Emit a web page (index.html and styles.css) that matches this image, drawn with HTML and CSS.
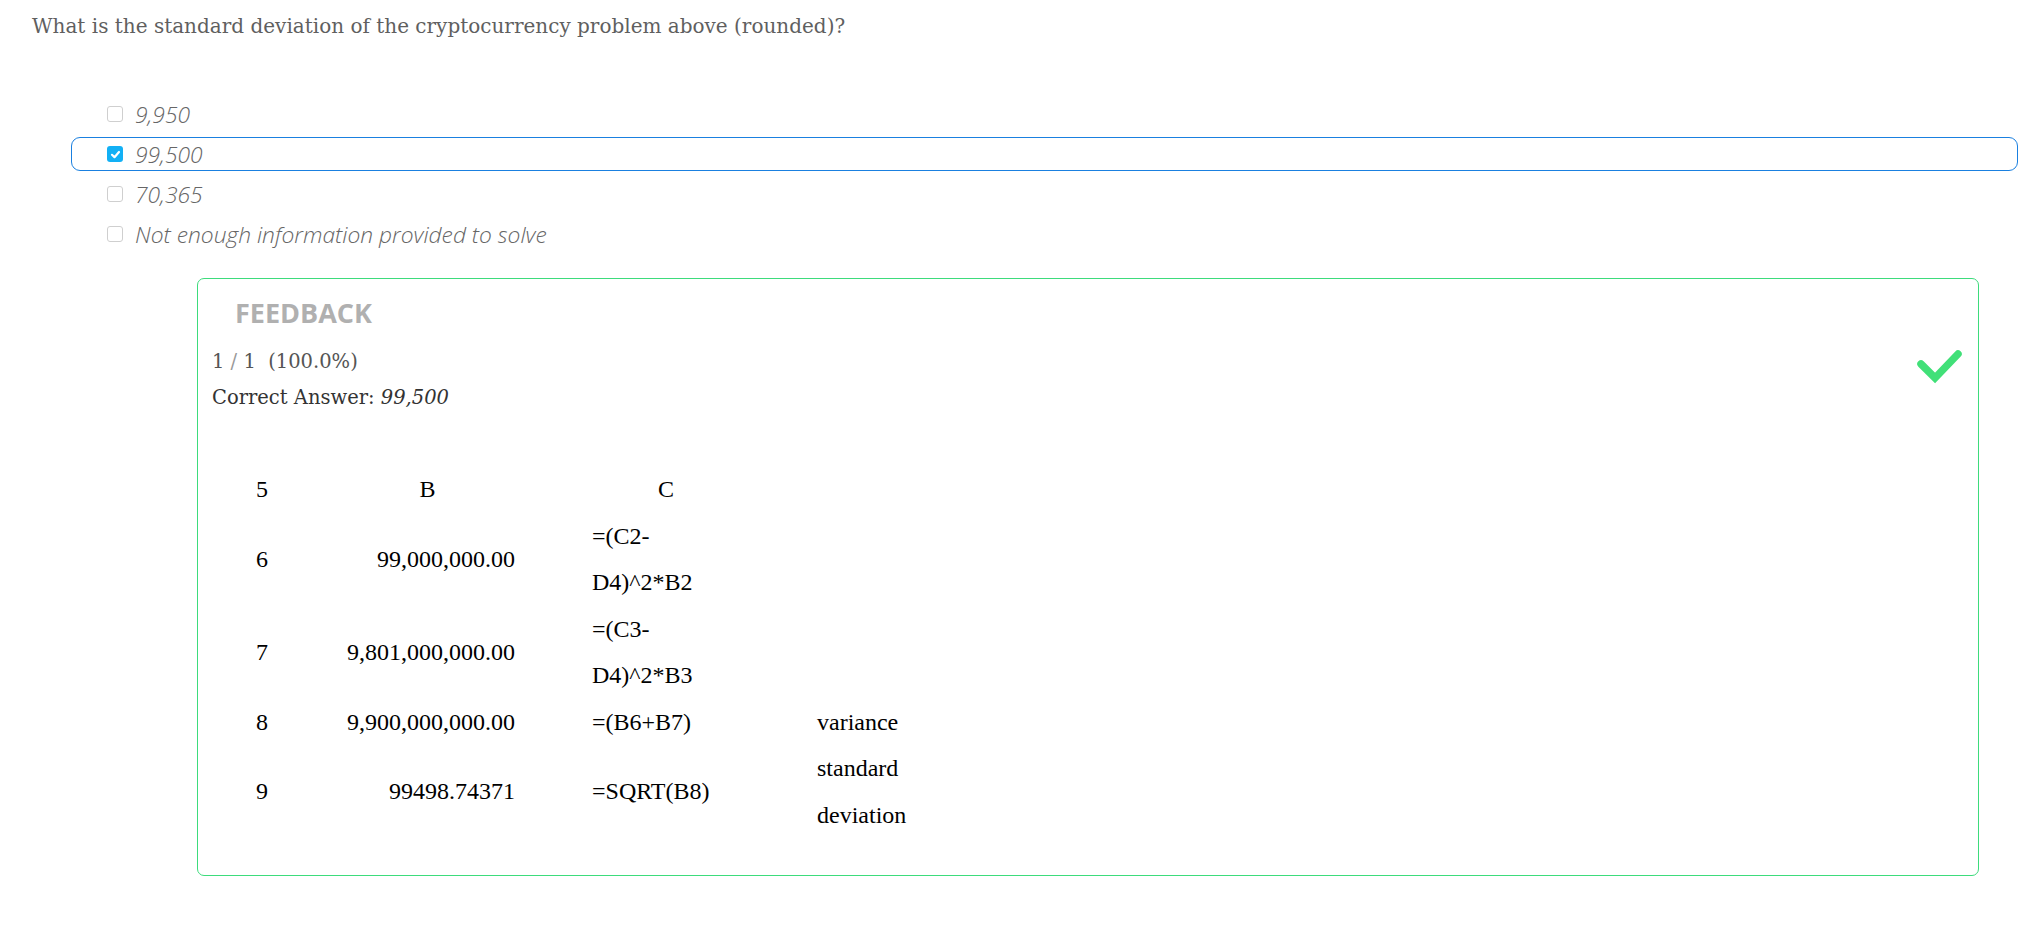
FILE: index.html
```html
<!DOCTYPE html>
<html lang="en">

<head>
    <meta charset="UTF-8">
    <meta name="viewport" content="width=device-width, initial-scale=1.0">
    <link rel="stylesheet" href="styles.css">
</head>

<body>

    <div class="question">What is the standard deviation of the cryptocurrency problem above (rounded)?</div>

    <div class="options">
        <div class="option">
            <span class="box"></span>
            <span class="label">9,950</span>
        </div>
        <div class="option selected">
            <span class="box checked">
                <svg width="11" height="11" viewBox="0 0 11 11"><polyline points="2,5.8 4.5,8.2 9,3" fill="none" stroke="#fff" stroke-width="2.2" stroke-linecap="round" stroke-linejoin="round"/></svg>
            </span>
            <span class="label">99,500</span>
        </div>
        <div class="option">
            <span class="box"></span>
            <span class="label">70,365</span>
        </div>
        <div class="option">
            <span class="box"></span>
            <span class="label">Not enough information provided to solve</span>
        </div>
    </div>

    <div class="feedback">
        <div class="feedback-title">FEEDBACK</div>

        <div class="result">
            <div class="score">
                <div class="score-line">1 <span class="slash">/</span> 1 &nbsp;(100.0%)</div>
                <div class="answer-line">Correct Answer: <em>99,500</em></div>
            </div>
            <svg class="check" width="50" height="38" viewBox="0 0 50 38">
                <polyline points="7,18 21,32 44,8" fill="none" stroke="#41e078" stroke-width="7.5" stroke-linecap="round" stroke-linejoin="miter"/>
            </svg>
        </div>

        <table class="sheet">
            <colgroup>
                <col class="col-a">
                <col class="col-b">
                <col class="col-c">
                <col class="col-d">
            </colgroup>
            <tr>
                <td>5</td>
                <td class="head">B</td>
                <td class="head">C</td>
                <td></td>
            </tr>
            <tr>
                <td>6</td>
                <td class="num">99,000,000.00</td>
                <td class="formula">=(C2-D4)^2*B2</td>
                <td></td>
            </tr>
            <tr>
                <td>7</td>
                <td class="num">9,801,000,000.00</td>
                <td class="formula">=(C3-D4)^2*B3</td>
                <td></td>
            </tr>
            <tr>
                <td>8</td>
                <td class="num">9,900,000,000.00</td>
                <td class="formula">=(B6+B7)</td>
                <td class="note">variance</td>
            </tr>
            <tr>
                <td>9</td>
                <td class="num">99498.74371</td>
                <td class="formula">=SQRT(B8)</td>
                <td class="note">standard deviation</td>
            </tr>
        </table>
    </div>

</body>

</html>
```

FILE: styles.css
```css
body {
    margin: 0;
    padding: 0;
    background-color: #fff;
    font-family: "DejaVu Serif", serif;
}

.question {
    padding: 12px 32px 0 32px;
    font-size: 20px;
    line-height: 28px;
    color: #5f5f5f;
}

.options {
    margin: 57px 10px 0 71px;
}

.option {
    display: flex;
    align-items: center;
    height: 32px;
    margin-bottom: 6px;
    padding-left: 35px;
    border: 1px solid transparent;
    border-radius: 9px;
}

.option.selected {
    border-color: #1a80e0;
}

.box {
    display: flex;
    align-items: center;
    justify-content: center;
    width: 14px;
    height: 14px;
    border: 1px solid #cfcfcf;
    border-radius: 3px;
    background-color: #fff;
}

.box.checked {
    width: 16px;
    height: 16px;
    border: none;
    background-color: #12b0f5;
}

.label {
    margin-left: 12px;
    font-family: "Open Sans", sans-serif;
    font-style: italic;
    font-weight: 300;
    font-size: 22.8px;
    color: #666;
}

.feedback {
    margin: 27px 49px 40px 197px;
    padding: 19px 14px 37px 14px;
    border: 1px solid #3ddc7c;
    border-radius: 7px;
}

.feedback-title {
    margin-left: 23px;
    font-family: "Open Sans", sans-serif;
    font-weight: bold;
    font-size: 27px;
    line-height: 30px;
    color: #b0b0b0;
}

.result {
    display: flex;
    justify-content: space-between;
    margin-top: 16px;
}

.score {
    font-size: 19.5px;
    line-height: 36px;
}

.score-line {
    color: #555;
}

.slash {
    color: #999;
}

.answer-line {
    color: #333;
}

.check {
    margin-top: 2px;
    margin-right: 0;
}

.sheet {
    margin: 50px 0 0 38px;
    border-collapse: collapse;
    table-layout: fixed;
    font-family: "Liberation Serif", serif;
    font-size: 24px;
    line-height: 46.5px;
    color: #000;
}

.col-a {
    width: 80px;
}

.col-b {
    width: 195px;
}

.col-c {
    width: 282px;
}

.col-d {
    width: 160px;
}

.sheet td {
    padding: 0 10px;
    vertical-align: middle;
}

.sheet td:first-child {
    padding-left: 6px;
}

.sheet td.head {
    padding: 0;
    text-align: center;
}

.sheet td.num {
    text-align: right;
}

.sheet td.formula {
    padding: 0 85px 0 67px;
}
```
